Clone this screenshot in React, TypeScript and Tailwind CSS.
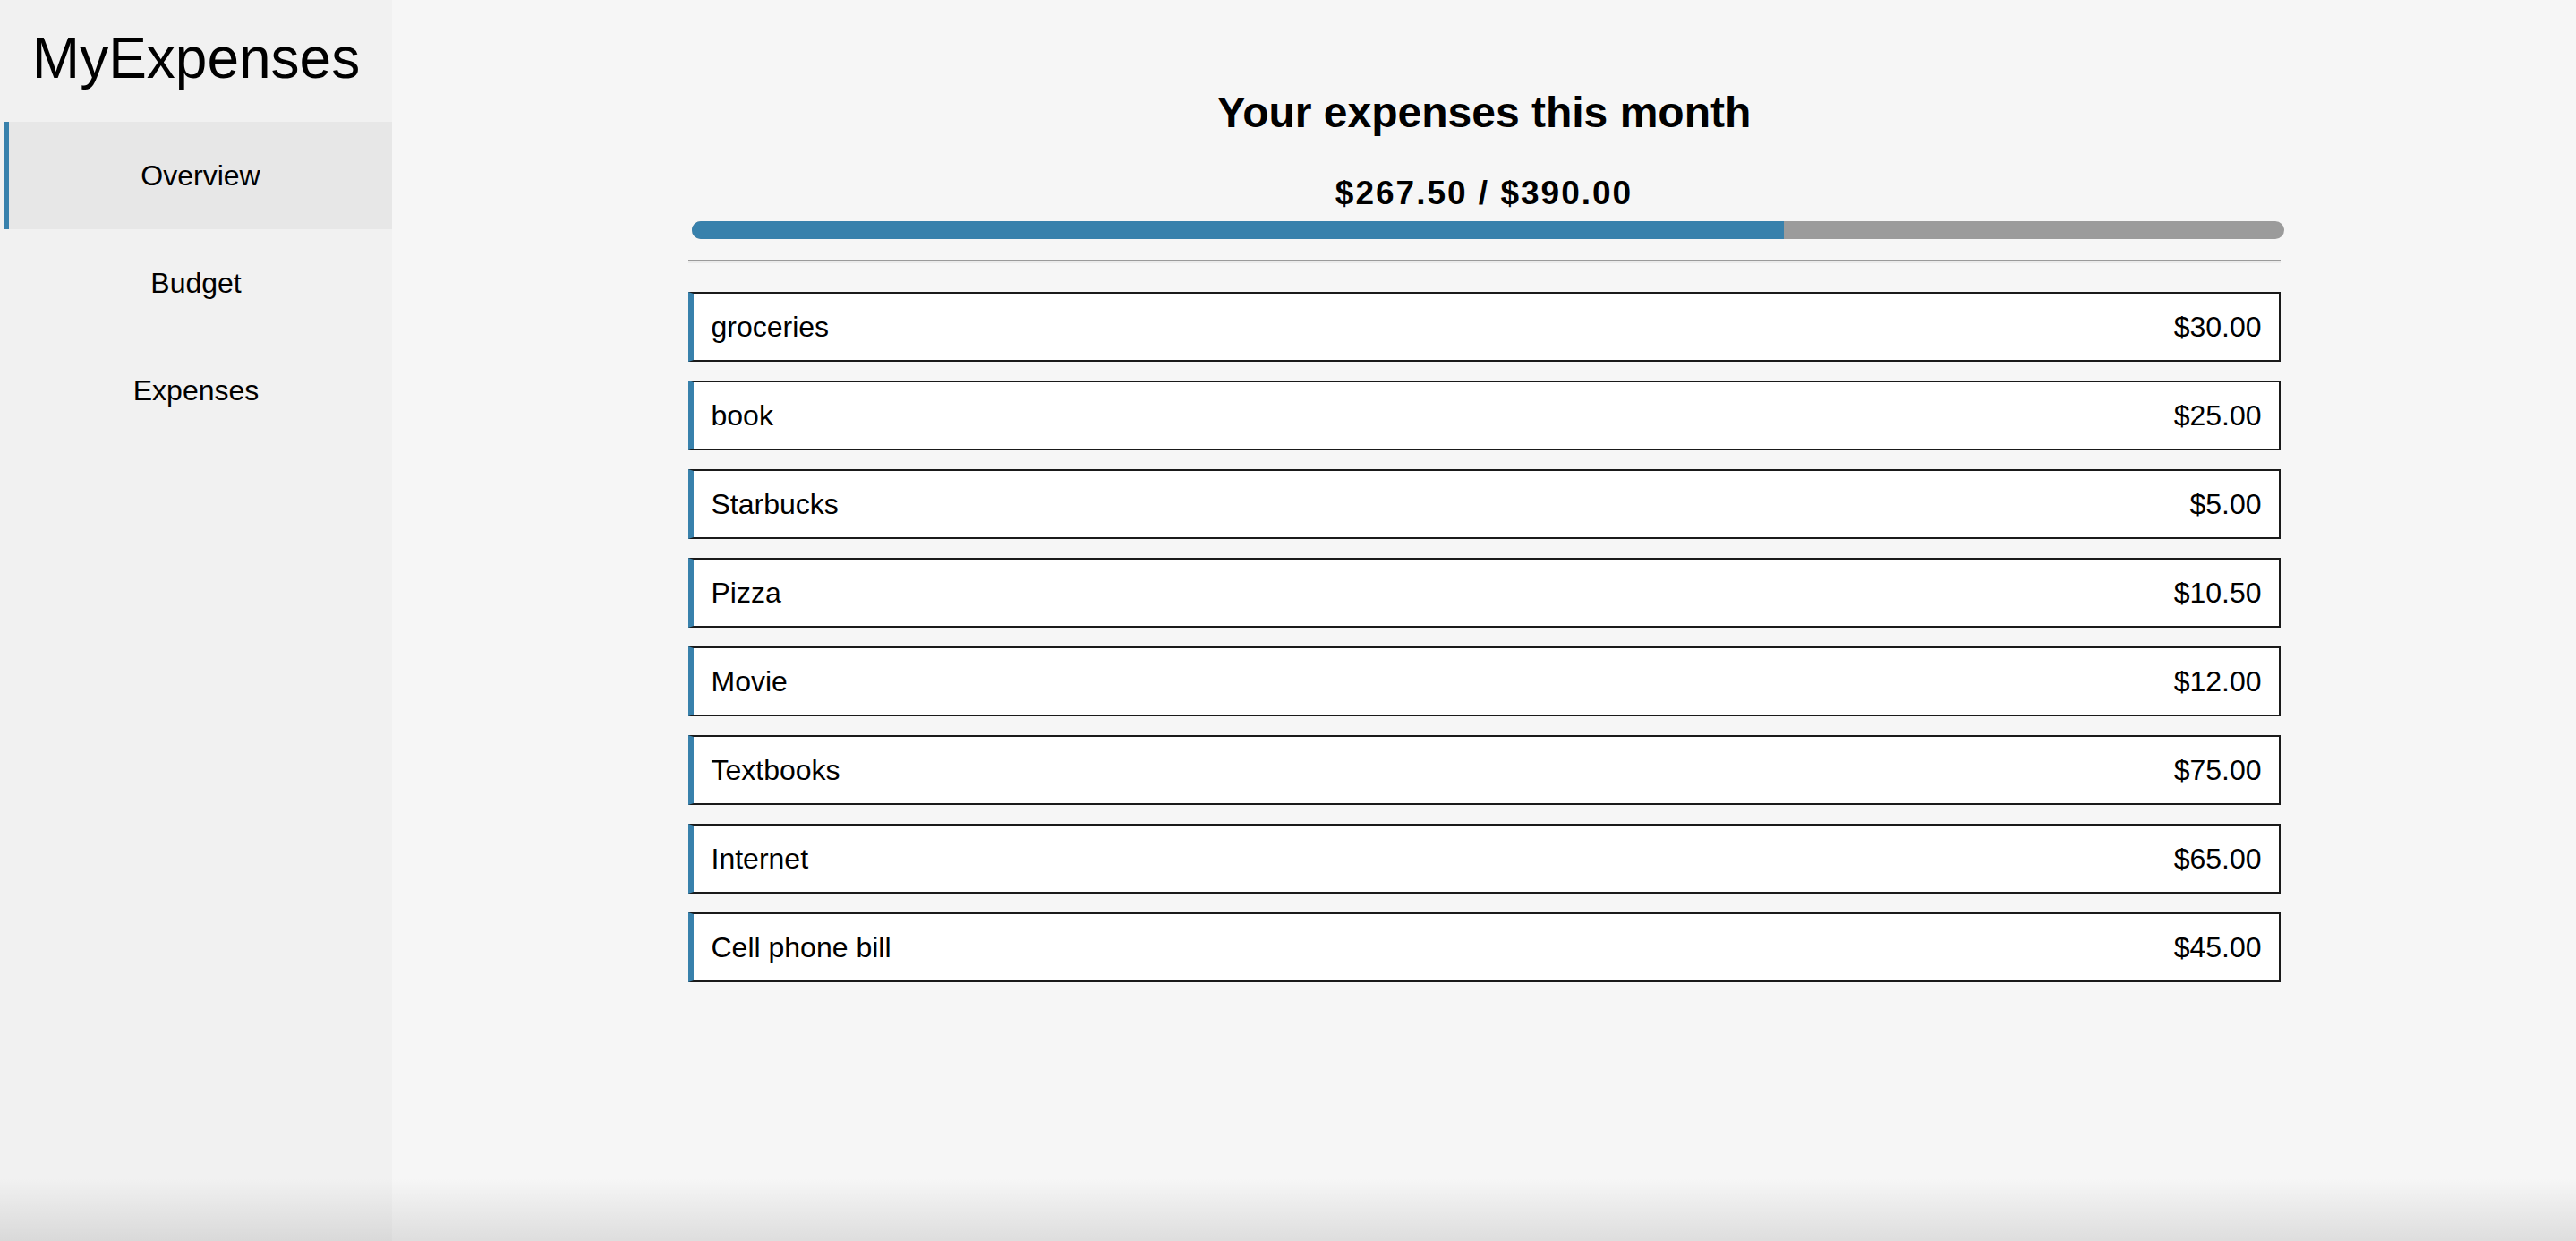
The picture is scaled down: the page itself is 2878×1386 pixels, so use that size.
const expenses = [
  { name: "groceries", amount: 30 },
  { name: "book", amount: 25 },
  { name: "Starbucks", amount: 5 },
  { name: "Pizza", amount: 10.5 },
  { name: "Movie", amount: 12 },
  { name: "Textbooks", amount: 75 },
  { name: "Internet", amount: 65 },
  { name: "Cell phone bill", amount: 45 },
];

const budget = 390;

function Sidebar() {
  return (
    <aside className="w-[438px] shrink-0 bg-[#f1f1f1] flex flex-col">
      <h1 className="h-[136px] pt-[29px] text-center text-[64px] leading-[73px] font-normal">
        MyExpenses
      </h1>
      <nav className="flex flex-col text-[32px]">
        <a className="ml-[4px] h-[120px] flex items-center justify-center border-l-[6px] border-[#3881ac] bg-[#e7e7e7]">
          Overview
        </a>
        <a className="h-[120px] flex items-center justify-center">Budget</a>
        <a className="h-[120px] flex items-center justify-center">Expenses</a>
      </nav>
    </aside>
  );
}

export default function App() {
  const total = expenses.reduce((s, e) => s + e.amount, 0);
  const pct = Math.min(100, (total / budget) * 100);

  return (
    <div className="relative h-screen flex bg-[#f6f6f6] text-black font-['Liberation_Sans',Arial,sans-serif] overflow-hidden">
      <Sidebar />

      <main className="flex-1">
        <div className="w-[1779px] mx-auto flex flex-col">
          <h2 className="pt-[98px] text-center text-[48px] leading-[55px] font-bold">
            Your expenses this month
          </h2>
          <h3 className="mt-[41px] text-center text-[37px] leading-[43px] font-bold tracking-[2px]">
            ${total.toFixed(2)} / ${budget.toFixed(2)}
          </h3>

          <div className="mt-[10px] ml-[4px] w-full h-[20px] rounded-full overflow-hidden bg-[#9b9b9b]">
            <div className="h-full bg-[#3881ac]" style={{ width: `${pct}%` }} />
          </div>

          <div className="mt-[23px] h-0 border-t-2 border-t-[#9b9b9b] border-b-2 border-b-[#ebebeb]" />

          <ul className="mt-[32px] flex flex-col gap-[21px]">
            {expenses.map((e) => (
              <li
                key={e.name}
                className="h-[78px] flex items-center justify-between bg-white border-2 border-[#1a1a1a] border-l-[6px] border-l-[#3881ac] pl-[20px] pr-[19px] text-[32px]"
              >
                <span>{e.name}</span>
                <span>${e.amount.toFixed(2)}</span>
              </li>
            ))}
          </ul>
        </div>
      </main>

      <div className="pointer-events-none absolute inset-x-0 bottom-0 h-[70px] bg-linear-to-b from-transparent to-black/10" />
    </div>
  );
}
